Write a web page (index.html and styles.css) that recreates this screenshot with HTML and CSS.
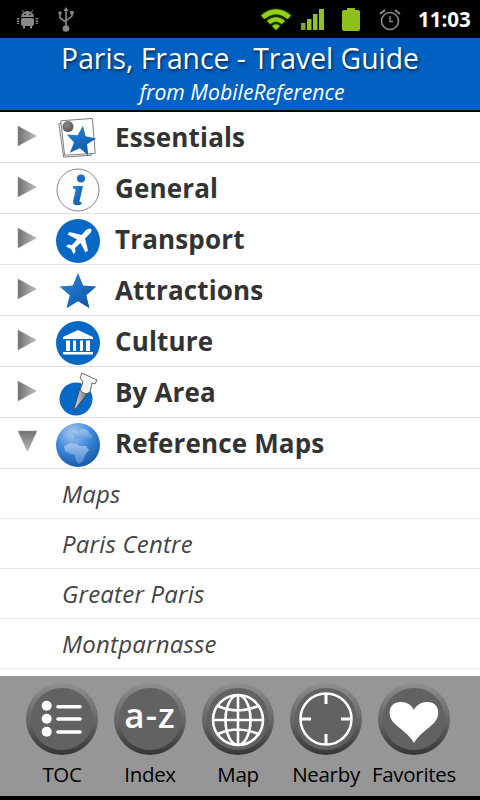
FILE: index.html
```html
<!DOCTYPE html>
<html lang="en">
<head>
<meta charset="utf-8">
<title>Paris, France - Travel Guide</title>
<link rel="stylesheet" href="styles.css">
</head>
<body>
<svg class="defs" width="0" height="0" aria-hidden="true">
  <defs>
    <linearGradient id="tri" x1="0" y1="0" x2="1" y2="0"><stop offset="0" stop-color="#6f6f6f"/><stop offset=".5" stop-color="#969696"/><stop offset="1" stop-color="#bcbcbc"/></linearGradient>
    <linearGradient id="triD" x1="0" y1="0" x2="0" y2="1"><stop offset="0" stop-color="#707070"/><stop offset="1" stop-color="#b8b8b8"/></linearGradient>
    <linearGradient id="blueStar" x1="0" y1="0" x2="1" y2="1"><stop offset="0" stop-color="#2a8ae0"/><stop offset="1" stop-color="#0a4f9e"/></linearGradient>
    <radialGradient id="globe" cx=".38" cy=".22" r=".9"><stop offset="0" stop-color="#a6c9f0"/><stop offset=".5" stop-color="#3a85d6"/><stop offset="1" stop-color="#0b4d9c"/></radialGradient>
    <linearGradient id="land" x1="0" y1="0" x2="0" y2="1"><stop offset="0" stop-color="#b4d0f2"/><stop offset="1" stop-color="#5d96da"/></linearGradient>
    <radialGradient id="dot" cx=".4" cy=".35" r=".7"><stop offset="0" stop-color="#8a8a8a"/><stop offset="1" stop-color="#555"/></radialGradient>
    <linearGradient id="btn" x1="0" y1="0" x2="0" y2="1"><stop offset="0" stop-color="#8e8e8e"/><stop offset=".5" stop-color="#686868"/><stop offset="1" stop-color="#363636"/></linearGradient>
    <linearGradient id="pin" x1="0" y1="0" x2="1" y2="0"><stop offset="0" stop-color="#e8e8e8"/><stop offset="1" stop-color="#5f5f5f"/></linearGradient>
    <symbol id="arrow-right" viewBox="0 0 20 22"><path d="M1 1 L19 11 L1 21 Z" fill="url(#tri)" stroke="#9a9a9a" stroke-width=".6"/></symbol>
    <symbol id="arrow-down" viewBox="0 0 22 22"><path d="M1 1 L20 1 L10.500 21 Z" fill="url(#triD)" stroke="#9a9a9a" stroke-width=".6"/></symbol>
    <symbol id="button" viewBox="0 0 72 74">
      <circle cx="36" cy="37" r="36" fill="url(#btn)"/>
      <circle cx="36" cy="37" r="31" fill="#626262"/>
    </symbol>
  </defs>
</svg>
<div class="screen">
  <div class="status">
    <svg class="st st-android" viewBox="0 0 21 20"><path d="M5 1l2 2.500M16 1l-2 2.500" stroke="#888" stroke-width="1"/><path d="M4 8a6.500 6 0 0 1 13 0z" fill="#888"/><rect x="4" y="9" width="13" height="8" rx="2" fill="#888"/><path d="M1 9v6M20 9v6" stroke="#888" stroke-width="2.400" stroke-dasharray="1.500 1"/><path d="M7 17v2.500M14 17v2.500" stroke="#888" stroke-width="2"/><circle cx="8" cy="5.500" r=".8" fill="#000"/><circle cx="13" cy="5.500" r=".8" fill="#000"/></svg>
    <svg class="st st-usb" viewBox="0 0 16 25"><path d="M8 2v18M2 7v4l6 4M14 6v3l-6 5" fill="none" stroke="#888" stroke-width="1.600"/><path d="M8 0l2.500 4h-5z" fill="#888"/><circle cx="2" cy="6" r="1.700" fill="#888"/><rect x="12.300" y="4" width="3.400" height="3.400" fill="#888"/><circle cx="8" cy="21.500" r="3.300" fill="#888"/></svg>
    <svg class="st st-wifi" viewBox="0 0 30 22"><g fill="#91d414"><path d="M0 7.500Q15 -5 30 7.500L26.500 11Q15 1.500 3.500 11Z"/><path d="M6 13Q15 5.500 24 13L20.800 16Q15 11 9.200 16Z"/><path d="M11 18Q15 14.500 19 18L15 22Z"/></g></svg>
    <svg class="st st-signal" viewBox="0 0 24 21"><g fill="#77a926"><rect x="0" y="14" width="4.500" height="7"/></g><g fill="#8fc423"><rect x="6" y="10" width="4.500" height="11"/><rect x="12" y="5" width="4.500" height="16"/><rect x="18" y="0" width="5" height="21"/></g></svg>
    <svg class="st st-battery" viewBox="0 0 20 23"><rect x="6" y="0" width="8" height="3" fill="#8fbf1a"/><rect x="1" y="2" width="18" height="21" rx="2" fill="#8fbf1a"/></svg>
    <svg class="st st-alarm" viewBox="0 0 22 23"><circle cx="11" cy="13" r="8.500" fill="none" stroke="#888" stroke-width="1.600"/><path d="M11 8v5.500h3" fill="none" stroke="#888" stroke-width="1.400"/><path d="M1 6l5-4M21 6l-5-4" stroke="#888" stroke-width="2"/></svg>
    <span class="time">11:03</span>
  </div>
  <header class="head">
    <h1 class="title">Paris, France - Travel Guide</h1>
    <p class="subtitle">from MobileReference</p>
  </header>
  <main class="list">
    <div class="row">
      <svg class="arrow"><use href="#arrow-right"/></svg>
      <svg class="ico" viewBox="0 0 46 44"><path d="M3 6L33 3 37 39 8 41z" fill="#fff" stroke="#777" stroke-width="1"/><path d="M5 3L38 0.500 41 37 9 39z" fill="#fff" stroke="#777" stroke-width="1"/><circle cx="12.500" cy="9" r="5.800" fill="url(#dot)"/><path d="M26 8l4.200 10.500 11.300.8-8.600 7.300 2.800 11.200-9.700-6-9.700 6 2.800-11.200-8.600-7.300 11.300-.8z" fill="url(#blueStar)" transform="rotate(8 26 24)"/></svg>
      <span class="label">Essentials</span>
    </div>
    <div class="row">
      <svg class="arrow"><use href="#arrow-right"/></svg>
      <svg class="ico" viewBox="0 0 44 44"><circle cx="22" cy="22" r="21" fill="#fff" stroke="#888"/><circle cx="25" cy="10.500" r="4" fill="#1a6cc4"/><path d="M17 18h10l-3.500 15q-.3 2 2.500 1l-1 2.500q-8 2.500-8-3l2.500-11q.2-2-2.700-2z" fill="url(#blueStar)"/></svg>
      <span class="label">General</span>
    </div>
    <div class="row">
      <svg class="arrow"><use href="#arrow-right"/></svg>
      <svg class="ico" viewBox="0 0 44 44"><circle cx="22" cy="22" r="22" fill="#0868c6"/><path d="M35 10q1.500 1.500-1.500 5L29 19.500l3 12-2.500 2-5-9.500-5.500 5 .5 4-2 2-2.500-5-5-2.500 2-2 4 .5 5-5.500-9.500-5 2-2.500 12 3L30 11q3.500-2.500 5-1z" fill="#fff"/></svg>
      <span class="label">Transport</span>
    </div>
    <div class="row">
      <svg class="arrow"><use href="#arrow-right"/></svg>
      <svg class="ico" viewBox="0 0 44 44"><path d="M22 3l5.200 12.500 13.300 1-10.200 8.700 3.200 13-11.500-7-11.500 7 3.200-13L3.500 16.500l13.300-1z" fill="url(#blueStar)"/></svg>
      <span class="label">Attractions</span>
    </div>
    <div class="row">
      <svg class="arrow"><use href="#arrow-right"/></svg>
      <svg class="ico" viewBox="0 0 44 44"><circle cx="22" cy="22" r="22" fill="#0868c6"/><path d="M22 9L37 16v2H7v-2z" fill="#fff"/><path d="M10 19.500h4V30h-4zM17 19.500h3V30h-3zM24 19.500h3V30h-3zM30 19.500h4V30h-4z" fill="#fff"/><path d="M7 31h30v2.500H7z" fill="#fff"/></svg>
      <span class="label">Culture</span>
    </div>
    <div class="row">
      <svg class="arrow"><use href="#arrow-right"/></svg>
      <svg class="ico" viewBox="0 0 44 44"><circle cx="20" cy="27" r="16.500" fill="#0868c6"/><path d="M24 16l9 4L17.500 39z" fill="url(#pin)" stroke="#222" stroke-width=".6"/><path d="M26 1l15 7-2 4-3-1-2 9q-5 4-10-2l3-8-3-4z" fill="#f4f4f4" stroke="#555" stroke-width=".9"/></svg>
      <span class="label">By Area</span>
    </div>
    <div class="row">
      <svg class="arrow arrow-d"><use href="#arrow-down"/></svg>
      <svg class="ico" viewBox="0 0 44 44"><circle cx="22" cy="22" r="22" fill="url(#globe)"/><path d="M14 11l4-3 5 1 3-3 5 1 3 4 3 2-2 3-5-1-3 1-5-1-4 1 0-3-3-1z" fill="url(#land)" opacity=".7"/><path d="M8 23l6-3 7 1 3 2 6 0 3 4-4 5-2 6-4 3-3-3-1-6-4-1-6-3z" fill="url(#land)" opacity=".75"/></svg>
      <span class="label">Reference Maps</span>
    </div>
    <div class="sub">Maps</div>
    <div class="sub">Paris Centre</div>
    <div class="sub">Greater Paris</div>
    <div class="sub">Montparnasse</div>
  </main>
  <nav class="bar">
    <div class="tool">
      <svg class="btn" viewBox="0 0 72 74"><use href="#button" width="72" height="74"/><g fill="#fff"><circle cx="20.700" cy="23.700" r="5"/><circle cx="20.700" cy="36.700" r="5"/><circle cx="20.700" cy="49.700" r="5"/></g><path d="M32 24.700h22M32 37h22M32 50h22" stroke="#fff" stroke-width="3.600" stroke-linecap="round"/></svg>
      <span class="tool-label">TOC</span>
    </div>
    <div class="tool">
      <svg class="btn" viewBox="0 0 72 74"><use href="#button" width="72" height="74"/><text class="az" x="36" y="46" text-anchor="middle">a-z</text></svg>
      <span class="tool-label">Index</span>
    </div>
    <div class="tool">
      <svg class="btn" viewBox="0 0 72 74"><use href="#button" width="72" height="74"/><g fill="none" stroke="#fff" stroke-width="2.600"><circle cx="36" cy="38" r="25"/><ellipse cx="36" cy="38" rx="12.500" ry="25"/><path d="M36 13v50M11 38h50M16 24q20 9 40 0M16 52q20-9 40 0"/></g></svg>
      <span class="tool-label">Map</span>
    </div>
    <div class="tool">
      <svg class="btn" viewBox="0 0 72 74"><use href="#button" width="72" height="74"/><g fill="none" stroke="#fff" stroke-width="2.500"><circle cx="36" cy="37" r="25.500"/></g><path d="M36 12v10M36 52v10M11 37h10M51 37h10" stroke="#fff" stroke-width="3"/></svg>
      <span class="tool-label">Nearby</span>
    </div>
    <div class="tool">
      <svg class="btn" viewBox="0 0 72 74"><use href="#button" width="72" height="74"/><path d="M36 61C31 52 22 47 16 41 9 34 10 20 23 20 30 20 34 24 36 28 38 24 42 20 49 20 62 20 63 34 56 41 50 47 41 52 36 61z" fill="#fff"/></svg>
      <span class="tool-label">Favorites</span>
    </div>
  </nav>
</div>
</body>
</html>
```
FILE: styles.css
```css
* { box-sizing: border-box; }
html, body { margin: 0; padding: 0; }
body { font-family: "Open Sans", "Noto Sans", sans-serif; background: #000; }
.defs { position: absolute; }
.screen { width: 480px; height: 800px; display: flex; flex-direction: column; background: #fff; overflow: hidden; }

.status { height: 38px; flex: none; background: #000; display: flex; align-items: center; }
.st { display: block; flex: none; }
.st-android { width: 21px; height: 20px; margin-left: 17px; }
.st-usb { width: 16px; height: 25px; margin-left: 20px; }
.st-wifi { width: 30px; height: 22px; margin-left: 187px; filter: drop-shadow(0 0 1.500px rgba(140,210,20,.6)); }
.st-signal { width: 24px; height: 21px; margin-left: 10px; }
.st-battery { width: 20px; height: 23px; margin-left: 16px; }
.st-alarm { width: 22px; height: 23px; margin-left: 18px; }
.time { margin-left: 17px; color: #fff; font-size: 20.500px; font-weight: 700; line-height: 38px; }

.head { height: 74px; flex: none; background: #0061c2; border-bottom: 2px solid #000; text-align: center; color: #fff; }
.title { margin: 0; font-size: 28.300px; font-weight: 400; line-height: 40px; text-shadow: 1px 2px 3px rgba(0,0,0,.6); }
.subtitle { margin: 0; padding-left: 4px; font-size: 21.200px; font-style: italic; line-height: 28px; }

.list { flex: 1 1 0; min-height: 0; overflow: hidden; background: #fff; }
.row { height: 51px; display: flex; align-items: center; border-bottom: 1px solid #e2e2e2; padding-left: 17px; }
.arrow { width: 20px; height: 22px; flex: none; margin-top: -2px; }
.arrow-d { width: 22px; margin-top: -4px; }
.ico { width: 44px; height: 44px; flex: none; margin: 3px 0 0 19px; }
.arrow-d + .ico { margin-left: 17px; }
.label { margin-left: 15px; font-size: 26px; font-weight: 700; color: #333; letter-spacing: .15px; }
.sub { height: 50px; line-height: 50px; border-bottom: 1px solid #e8e8e8; padding-left: 62px; font-size: 24px; font-style: italic; color: #444; letter-spacing: .2px; }

.bar { height: 124px; flex: none; background: #969696; border-bottom: 4px solid #000; display: flex; padding: 6px 22px 0 18px; }
.tool { width: 88px; display: flex; flex-direction: column; align-items: center; }
.btn { width: 72px; height: 74px; display: block; flex: none; }
.az { font-family: "Open Sans", sans-serif; font-size: 35px; font-weight: 600; fill: #fff; letter-spacing: 1px; }
.tool-label { margin-top: 3px; font-size: 20.500px; line-height: 30px; color: #000; white-space: nowrap; letter-spacing: -.3px; }
```
